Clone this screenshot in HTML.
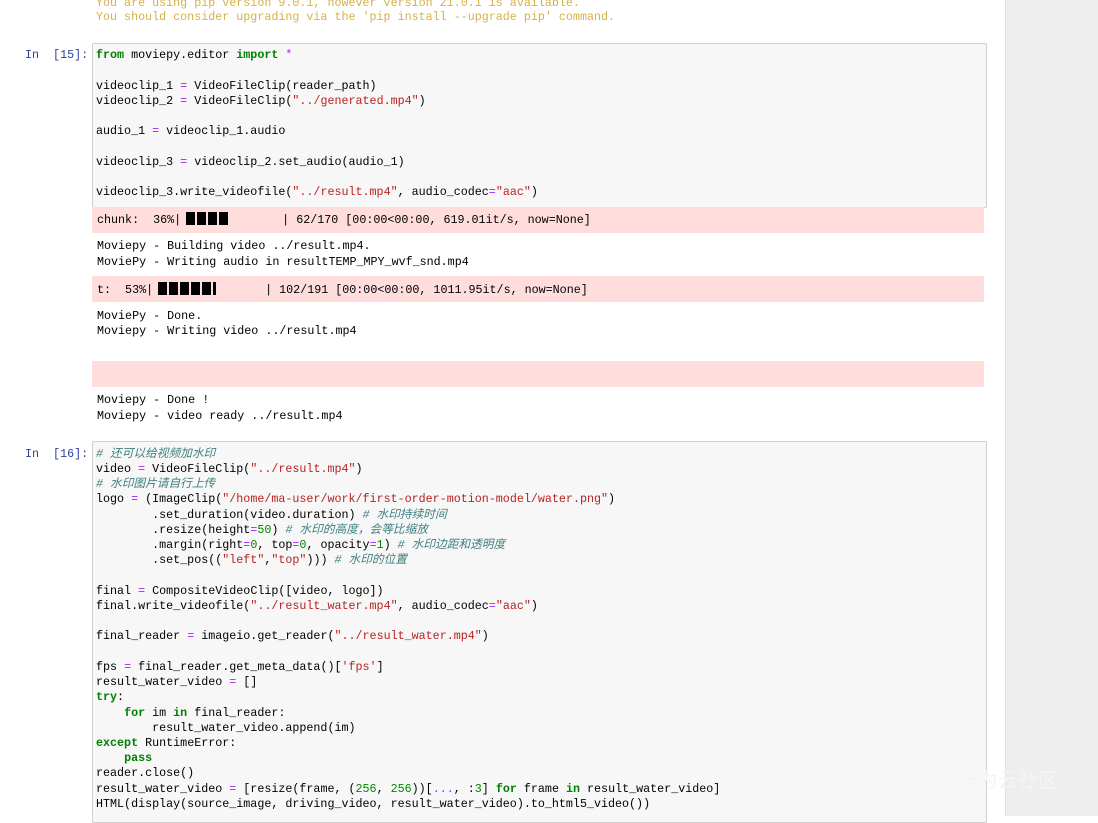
<!DOCTYPE html>
<html><head><meta charset="utf-8"><style>
html,body{margin:0;padding:0;}
body{width:1098px;height:816px;position:relative;overflow:hidden;background:#fff;font-family:"Liberation Mono","Noto Sans CJK SC",monospace;font-size:11.7px;color:#000;}
.gray{position:absolute;left:1005px;top:0;width:93px;height:816px;background:#eeeeee;border-left:1px solid #e0e0e0;}
.l{position:absolute;white-space:pre;line-height:15px;height:15px;}
.cell{position:absolute;left:92px;width:893px;background:#f7f7f7;border:1px solid #cfcfcf;border-radius:2px;}
.pink{position:absolute;left:92px;width:892px;background:#fdd;}
.p{position:absolute;left:25px;color:#303F9F;white-space:pre;line-height:15px;}
.k{color:#008000;font-weight:bold}
.s{color:#BA2121}
.o{color:#AA22FF}
.c{color:#408080;font-style:italic}
.n{color:#080}
.w{color:#d6b04a}
.bar{display:inline-block;vertical-align:-2px;height:13px;}
.b{display:inline-block;width:9px;height:13px;background:#000;margin-right:2px;}
</style></head><body>
<div class="gray"></div>
<div class="l w" style="left:96px;top:-4px">You are using pip version 9.0.1, however version 21.0.1 is available.</div>
<div class="l w" style="left:96px;top:10px">You should consider upgrading via the 'pip install --upgrade pip' command.</div>

<div class="p" style="top:48px">In  [15]:</div>
<div class="cell" style="top:43px;height:163px"></div>
<div class="l" style="left:96px;top:48px"><span class="k">from</span> moviepy.editor <span class="k">import</span> <span class="o">*</span></div>
<div class="l" style="left:96px;top:79px">videoclip_1 <span class="o">=</span> VideoFileClip(reader_path)</div>
<div class="l" style="left:96px;top:94px">videoclip_2 <span class="o">=</span> VideoFileClip(<span class="s">"../generated.mp4"</span>)</div>
<div class="l" style="left:96px;top:124px">audio_1 <span class="o">=</span> videoclip_1.audio</div>
<div class="l" style="left:96px;top:155px">videoclip_3 <span class="o">=</span> videoclip_2.set_audio(audio_1)</div>
<div class="l" style="left:96px;top:185px">videoclip_3.write_videofile(<span class="s">"../result.mp4"</span>, audio_codec<span class="o">=</span><span class="s">"aac"</span>)</div>

<div class="pink" style="top:207px;height:26px"></div>
<div class="l" style="left:97px;top:212px">chunk:  36%|<span class="bar" style="width:101px"><span style="display:inline-block;width:5px"></span><span class="b"></span><span class="b"></span><span class="b"></span><span class="b"></span></span>| 62/170 [00:00&lt;00:00, 619.01it/s, now=None]</div>
<div class="l" style="left:97px;top:239px">Moviepy - Building video ../result.mp4.</div>
<div class="l" style="left:97px;top:255px">MoviePy - Writing audio in resultTEMP_MPY_wvf_snd.mp4</div>
<div class="pink" style="top:276px;height:26px"></div>
<div class="l" style="left:97px;top:282px">t:  53%|<span class="bar" style="width:112px"><span style="display:inline-block;width:5px"></span><span class="b"></span><span class="b"></span><span class="b"></span><span class="b"></span><span class="b"></span><span class="b" style="width:3px"></span></span>| 102/191 [00:00&lt;00:00, 1011.95it/s, now=None]</div>
<div class="l" style="left:97px;top:309px">MoviePy - Done.</div>
<div class="l" style="left:97px;top:324px">Moviepy - Writing video ../result.mp4</div>
<div class="pink" style="top:361px;height:26px"></div>
<div class="l" style="left:97px;top:393px">Moviepy - Done !</div>
<div class="l" style="left:97px;top:409px">Moviepy - video ready ../result.mp4</div>

<div class="p" style="top:447px">In  [16]:</div>
<div class="cell" style="top:441px;height:380px"></div>
<div class="l c" style="left:96px;top:447px"># 还可以给视频加水印</div>
<div class="l" style="left:96px;top:462px">video <span class="o">=</span> VideoFileClip(<span class="s">"../result.mp4"</span>)</div>
<div class="l c" style="left:96px;top:477px"># 水印图片请自行上传</div>
<div class="l" style="left:96px;top:492px">logo <span class="o">=</span> (ImageClip(<span class="s">"/home/ma-user/work/first-order-motion-model/water.png"</span>)</div>
<div class="l" style="left:96px;top:508px">        .set_duration(video.duration) <span class="c"># 水印持续时间</span></div>
<div class="l" style="left:96px;top:523px">        .resize(height<span class="o">=</span><span class="n">50</span>) <span class="c"># 水印的高度，会等比缩放</span></div>
<div class="l" style="left:96px;top:538px">        .margin(right<span class="o">=</span><span class="n">0</span>, top<span class="o">=</span><span class="n">0</span>, opacity<span class="o">=</span><span class="n">1</span>) <span class="c"># 水印边距和透明度</span></div>
<div class="l" style="left:96px;top:553px">        .set_pos((<span class="s">"left"</span>,<span class="s">"top"</span>))) <span class="c"># 水印的位置</span></div>
<div class="l" style="left:96px;top:584px">final <span class="o">=</span> CompositeVideoClip([video, logo])</div>
<div class="l" style="left:96px;top:599px">final.write_videofile(<span class="s">"../result_water.mp4"</span>, audio_codec<span class="o">=</span><span class="s">"aac"</span>)</div>
<div class="l" style="left:96px;top:629px">final_reader <span class="o">=</span> imageio.get_reader(<span class="s">"../result_water.mp4"</span>)</div>
<div class="l" style="left:96px;top:660px">fps <span class="o">=</span> final_reader.get_meta_data()[<span class="s">'fps'</span>]</div>
<div class="l" style="left:96px;top:675px">result_water_video <span class="o">=</span> []</div>
<div class="l" style="left:96px;top:690px"><span class="k">try</span>:</div>
<div class="l" style="left:96px;top:706px">    <span class="k">for</span> im <span class="k">in</span> final_reader:</div>
<div class="l" style="left:96px;top:721px">        result_water_video.append(im)</div>
<div class="l" style="left:96px;top:736px"><span class="k">except</span> RuntimeError:</div>
<div class="l" style="left:96px;top:751px">    <span class="k">pass</span></div>
<div class="l" style="left:96px;top:766px">reader.close()</div>
<div class="l" style="left:96px;top:782px">result_water_video <span class="o">=</span> [resize(frame, (<span class="n">256</span>, <span class="n">256</span>))[<span class="o">...</span>, :<span class="n">3</span>] <span class="k">for</span> frame <span class="k">in</span> result_water_video]</div>
<div class="l" style="left:96px;top:797px">HTML(display(source_image, driving_video, result_water_video).to_html5_video())</div>
<div style="position:absolute;left:958px;top:764px;color:#f4f4f4;font-family:'Noto Sans CJK SC',sans-serif;font-size:20px">华为云社区</div>
</body></html>
